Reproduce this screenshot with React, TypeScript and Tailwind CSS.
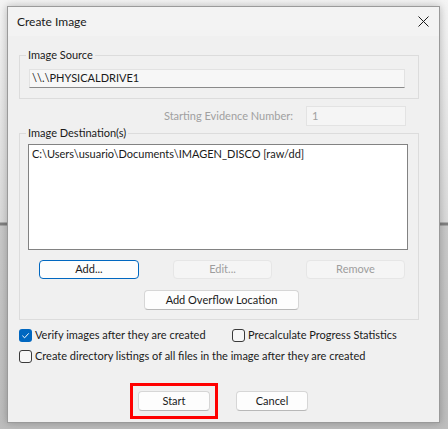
import React from "react";

const FONT = "font-['Lato','Segoe_UI','Noto_Sans',sans-serif]";

/* ─── small controls ─── */

function Button({
  children,
  width,
  state = "normal",
}: {
  children: React.ReactNode;
  width: string;
  state?: "normal" | "default" | "disabled";
}) {
  if (state === "default") {
    return (
      <div
        className={`${width} h-[19px] flex items-center justify-center rounded-[4px] border-[1.5px] border-[#0067c0] bg-[#fdfdfd] text-[11px] text-[#1a1a1a]`}
      >
        {children}
      </div>
    );
  }
  if (state === "disabled") {
    return (
      <div
        className={`${width} h-[19px] flex items-center justify-center rounded-[4px] border border-[#e6e6e6] bg-[#f5f5f5] text-[11px] text-[#9d9d9d]`}
      >
        {children}
      </div>
    );
  }
  return (
    <div
      className={`${width} h-[20px] flex items-center justify-center rounded-[4px] border border-[#d6d6d6] border-b-[#b8b8b8] bg-[#fdfdfd] text-[11px] text-[#1a1a1a]`}
    >
      {children}
    </div>
  );
}

function Check({ checked, label }: { checked?: boolean; label: string }) {
  return (
    <div className="h-[16px] flex items-center gap-[3px]">
      {checked ? (
        <div className="w-[13px] h-[13px] rounded-[3px] bg-[#0067c0] flex items-center justify-center">
          <svg width="9" height="9" viewBox="0 0 10 10">
            <path d="M1.5 5.2 L4 7.6 L8.6 2.6" fill="none" stroke="#ffffff" strokeWidth="1.1" />
          </svg>
        </div>
      ) : (
        <div className="w-[13px] h-[13px] rounded-[3px] border border-[#3a3a3a] bg-[#f7f7f7]" />
      )}
      <span className="text-[11px] leading-[16px] text-[#1a1a1a] whitespace-nowrap">{label}</span>
    </div>
  );
}

function Group({
  label,
  className,
  children,
}: {
  label: string;
  className: string;
  children: React.ReactNode;
}) {
  return (
    <div className={`relative w-[400px] border border-[#dcdcdc] ${className}`}>
      <span className="absolute -top-[9px] left-[6px] px-[2px] bg-[#f0f0f0] text-[11px] leading-[16px] text-[#1a1a1a]">
        {label}
      </span>
      {children}
    </div>
  );
}

/* ─── page ─── */

export default function App() {
  return (
    <div
      className={`${FONT} w-[448px] h-[429px] overflow-hidden pl-[7px] pt-[6px] bg-[linear-gradient(to_bottom,#f4f4f4_0px,#dadada_222px,#808080_223px,#808080_225px,#c9c9c9_226px,#bdbdbd_429px)]`}
    >
      <div className="w-[433px] h-[417px] flex flex-col border border-[#9a9a9a] bg-[#f0f0f0] shadow-[0_0_8px_rgba(0,0,0,0.25)]">
        {/* title bar */}
        <div className="h-[29px] shrink-0 flex items-center justify-between bg-[#f3f3f3] pl-[9px] pr-[10px]">
          <span className="text-[12px] text-[#1a1a1a]">Create Image</span>
          <svg width="11" height="11" viewBox="0 0 11 11">
            <path d="M0.5 0.5 L10.5 10.5 M10.5 0.5 L0.5 10.5" stroke="#1a1a1a" strokeWidth="1" />
          </svg>
        </div>

        {/* body */}
        <div className="flex flex-col pl-[11px]">
          <Group label="Image Source" className="mt-[19px] h-[44px]">
            <div className="ml-[9px] mt-[13px] w-[376px] h-[19px] flex items-center pl-[2px] bg-[#f7f7f7] border border-[#e2e2e2] border-b-[#8a8a8a] text-[11px] text-[#1a1a1a]">
              \\.\PHYSICALDRIVE1
            </div>
          </Group>

          <div className="w-[400px] mt-[7px] flex items-center justify-end pr-[13px] gap-[13px]">
            <span className="text-[11px] text-[#a0a0a0]">Starting Evidence Number:</span>
            <div className="w-[100px] h-[20px] flex items-center pl-[5px] bg-[#f5f5f5] border border-[#e3e3e3] text-[11px] text-[#a0a0a0]">
              1
            </div>
          </div>

          <Group label="Image Destination(s)" className="mt-[7px] h-[187px]">
            <div className="ml-[8px] mt-[10px] w-[380px] h-[106px] bg-white border border-[#828282] px-[3px] pt-[1px] text-[11px] text-[#1a1a1a] leading-[16px]">
              C:\Users\usuario\Documents\IMAGEN_DISCO [raw/dd]
            </div>
            <div className="ml-[19px] mt-[10px] w-[366px] flex justify-between">
              <Button width="w-[100px]" state="default">
                Add...
              </Button>
              <Button width="w-[99px]" state="disabled">
                Edit...
              </Button>
              <Button width="w-[99px]" state="disabled">
                Remove
              </Button>
            </div>
            <div className="ml-[124px] mt-[11px]">
              <Button width="w-[155px]">Add Overflow Location</Button>
            </div>
          </Group>

          <div className="mt-[7px] flex items-center">
            <div className="w-[213px]">
              <Check checked label="Verify images after they are created" />
            </div>
            <Check label="Precalculate Progress Statistics" />
          </div>
          <div className="mt-[5px]">
            <Check label="Create directory listings of all files in the image after they are created" />
          </div>

          <div className="mt-[19px] ml-[111px] flex items-center gap-[18px]">
            <div className="border-[3px] border-[#ff0000] p-[5px]">
              <Button width="w-[72px]">Start</Button>
            </div>
            <Button width="w-[72px]">Cancel</Button>
          </div>
        </div>
      </div>
    </div>
  );
}
